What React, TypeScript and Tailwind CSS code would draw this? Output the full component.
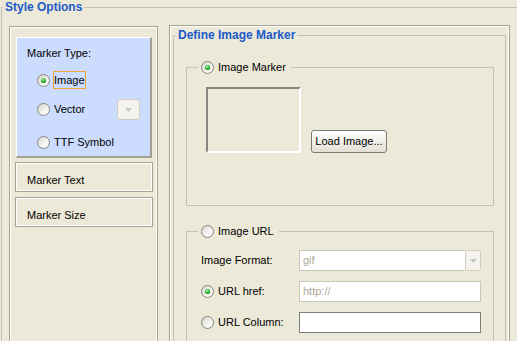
import React from "react";

const Radio = ({ checked = false }: { checked?: boolean }) => (
  <svg width="13" height="13" viewBox="0 0 13 13" className="block shrink-0">
    <defs>
      <linearGradient id="rg" x1="0" y1="0" x2="1" y2="1">
        <stop offset="0" stopColor="#d2d2ca" />
        <stop offset="0.55" stopColor="#f3f3ef" />
        <stop offset="1" stopColor="#ffffff" />
      </linearGradient>
      <radialGradient id="rdot" cx="0.4" cy="0.35" r="0.7">
        <stop offset="0" stopColor="#b4f5b4" />
        <stop offset="0.5" stopColor="#3cc03c" />
        <stop offset="1" stopColor="#1f8f1f" />
      </radialGradient>
    </defs>
    <circle cx="6.5" cy="6.5" r="6" fill="url(#rg)" stroke="#86867e" strokeWidth="1" />
    {checked && <circle cx="6.5" cy="6.5" r="2.6" fill="url(#rdot)" />}
  </svg>
);

const DropBtn = ({ className = "" }: { className?: string }) => (
  <div
    className={`flex items-center justify-center rounded-[3px] border border-[#cfcdc0] bg-[#f4f3ee] ${className}`}
  >
    <svg width="7" height="4" viewBox="0 0 7 4" className="block">
      <path d="M0 0h7L3.5 4z" fill="#c9c7ba" />
    </svg>
  </div>
);

const panel =
  "border border-[#a5a394] shadow-[inset_1px_1px_0_#ffffff,inset_-1px_-1px_0_#ffffff]";

export default function App() {
  return (
    <div className="w-[517px] h-[341px] overflow-hidden bg-[#ece9d8] font-['Liberation_Sans',Arial,sans-serif] text-[11px] leading-[13px] text-black">
      <fieldset className="ml-[1px] w-[540px] h-[400px] border border-[#c5c2b2]">
        <legend className="ml-[1px] px-[2px] font-bold text-[12px] leading-[14px] text-[#2159c9]">
          Style Options
        </legend>
        <div className="flex items-start gap-[11px] ml-[7px] mt-[11px]">
          {/* Left panel */}
          <div className={`mt-[1px] w-[149px] h-[330px] pt-[10px] pl-[5px] pr-[4px] ${panel}`}>
            <div className="mx-[1px] h-[121px] bg-[#ccdcff] border-l border-t border-white border-r-2 border-b-2 border-r-[#a3a194] border-b-[#a3a194] pt-[9px] pl-[10px] pr-[10px]">
              <div>Marker Type:</div>
              <div className="mt-[11px] ml-[10px] flex items-center h-[18px]">
                <Radio checked />
                <span className="ml-[3px] h-[18px] px-0 border border-[#eda53a] flex items-center">
                  Image
                </span>
              </div>
              <div className="mt-[10px] ml-[10px] flex items-center h-[21px]">
                <Radio />
                <span className="ml-[4px]">Vector</span>
                <DropBtn className="ml-auto w-[23px] h-[21px]" />
              </div>
              <div className="mt-[13px] ml-[10px] flex items-center h-[18px]">
                <Radio />
                <span className="ml-[4px]">TTF Symbol</span>
              </div>
            </div>
            <div className={`mt-[4px] h-[30px] pl-[11px] pt-[7px] flex items-center ${panel}`}>
              Marker Text
            </div>
            <div className={`mt-[5px] h-[30px] pl-[11px] pt-[7px] flex items-center ${panel}`}>
              Marker Size
            </div>
          </div>

          {/* Right panel */}
          <div className={`w-[341px] h-[330px] ${panel}`}>
            <fieldset className="ml-[3px] mt-[2px] w-[333px] h-[330px] border border-[#c5c2b2]">
              <legend className="ml-[2px] px-[2px] font-bold text-[12px] leading-[14px] text-[#2159c9]">
                Define Image Marker
              </legend>

              <fieldset className="ml-[12px] mt-[19px] w-[308px] border border-[#c5c2b2] pb-[52px]">
                <legend className="ml-[11px] pl-[3px] pr-[5px]">
                  <div className="flex items-center h-[13px]">
                    <Radio checked />
                    <span className="ml-[4px]">Image Marker</span>
                  </div>
                </legend>
                <div className="flex items-end ml-[19px] mt-[13px]">
                  <div className="w-[95px] h-[66px] border-2 border-t-[#87867f] border-l-[#87867f] border-r-white border-b-white" />
                  <button className="ml-[10px] w-[76px] h-[23px] rounded-[3px] border border-[#7b7a74] bg-linear-to-b from-white to-[#e2dfd5] text-[11px] leading-[13px] text-black">
                    Load Image...
                  </button>
                </div>
              </fieldset>

              <fieldset className="ml-[12px] mt-[19px] w-[308px] border border-[#c5c2b2] pb-[40px]">
                <legend className="ml-[11px] pl-[3px] pr-[5px]">
                  <div className="flex items-center h-[13px]">
                    <Radio />
                    <span className="ml-[4px]">Image URL</span>
                  </div>
                </legend>
                <div className="mt-[12px] pl-[14px] flex flex-col gap-[10px]">
                  <div className="flex items-center h-[21px]">
                    <div className="w-[98px]">Image Format:</div>
                    <div className="w-[182px] h-[21px] flex">
                      <div className="flex-1 h-full border border-r-0 border-[#c9c7ba] bg-white pl-[3px] flex items-center text-[#aca899]">
                        gif
                      </div>
                      <DropBtn className="w-[16px] h-[21px]" />
                    </div>
                  </div>
                  <div className="flex items-center h-[21px]">
                    <div className="w-[98px] flex items-center">
                      <Radio checked />
                      <span className="ml-[4px]">URL href:</span>
                    </div>
                    <div className="w-[182px] h-[21px] border border-[#c9c7ba] bg-white pl-[3px] flex items-center text-[#aca899]">
                      http://
                    </div>
                  </div>
                  <div className="flex items-center h-[21px]">
                    <div className="w-[98px] flex items-center">
                      <Radio />
                      <span className="ml-[4px]">URL Column:</span>
                    </div>
                    <div className="w-[182px] h-[21px] border border-[#7f7f7a] bg-white" />
                  </div>
                </div>
              </fieldset>
            </fieldset>
          </div>
        </div>
      </fieldset>
    </div>
  );
}
